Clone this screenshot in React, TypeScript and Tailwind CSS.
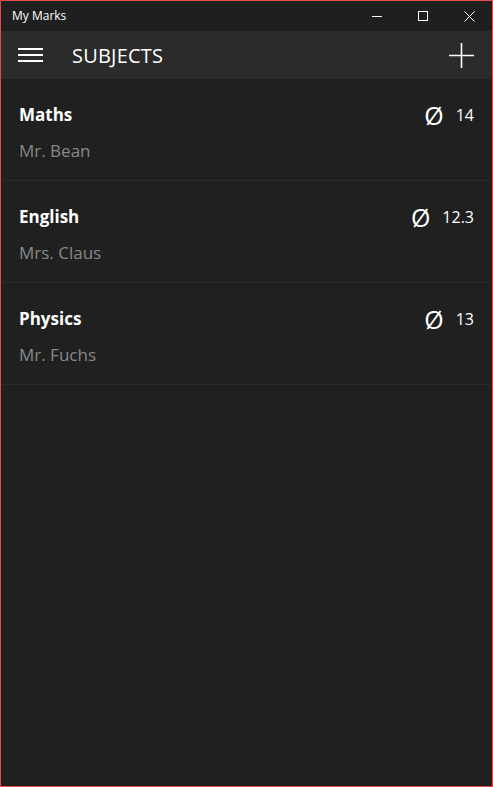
import React from 'react';

const subjects = [
  { name: 'Maths', teacher: 'Mr. Bean', avg: '14' },
  { name: 'English', teacher: 'Mrs. Claus', avg: '12.3' },
  { name: 'Physics', teacher: 'Mr. Fuchs', avg: '13' },
];

export default function App() {
  return (
    <div
      className="w-[493px] h-[787px] border border-[#e84a4a] bg-[#202020] flex flex-col overflow-hidden"
      style={{ fontFamily: '"Open Sans", "Noto Sans", sans-serif' }}
    >
      {/* Title bar */}
      <div className="h-[30px] bg-[#1f1f1f] flex items-center shrink-0">
        <span className="pl-[11px] text-[12px] text-white">My Marks</span>
        <div className="ml-auto flex items-center h-full">
          <div className="w-[46px] h-full flex items-center justify-center">
            <div className="w-[10px] h-px bg-white" />
          </div>
          <div className="w-[46px] h-full flex items-center justify-center">
            <div className="w-[10px] h-[10px] border border-white" />
          </div>
          <div className="w-[46px] h-full flex items-center justify-center">
            <svg width="11" height="11" viewBox="0 0 11 11" stroke="white" strokeWidth="1">
              <path d="M0.5 0.5 L10.5 10.5 M10.5 0.5 L0.5 10.5" />
            </svg>
          </div>
        </div>
      </div>

      {/* Header */}
      <div className="h-[48px] bg-[#2b2b2b] flex items-center shrink-0">
        <div className="pl-[17px] w-[71px]">
          <div className="w-[25px] flex flex-col gap-[4px]">
            <div className="h-[2px] bg-white" />
            <div className="h-[2px] bg-white" />
            <div className="h-[2px] bg-white" />
          </div>
        </div>
        <span className="text-[20px] text-white tracking-[0.2px] pt-[2px]">SUBJECTS</span>
        <div className="ml-auto pr-[18px]">
          <svg width="25" height="25" viewBox="0 0 25 25" stroke="white" strokeWidth="1.6">
            <path d="M12.5 0 V25 M0 12.5 H25" />
          </svg>
        </div>
      </div>

      {/* Subject list */}
      <div className="flex flex-col">
        {subjects.map((s) => (
          <div key={s.name} className="h-[102px] border-b border-[#2a2a2a] px-[18px] pt-[23px]">
            <div className="flex items-center h-[26px]">
              <span className="text-[17px] font-bold text-white">{s.name}</span>
              <div className="ml-auto flex items-center gap-[12px]">
                <span className="text-[25px] leading-none text-white">Ø</span>
                <span className="text-[16px] text-white">{s.avg}</span>
              </div>
            </div>
            <div className="mt-[10px] text-[17px] text-[#888888]">{s.teacher}</div>
          </div>
        ))}
      </div>
    </div>
  );
}
